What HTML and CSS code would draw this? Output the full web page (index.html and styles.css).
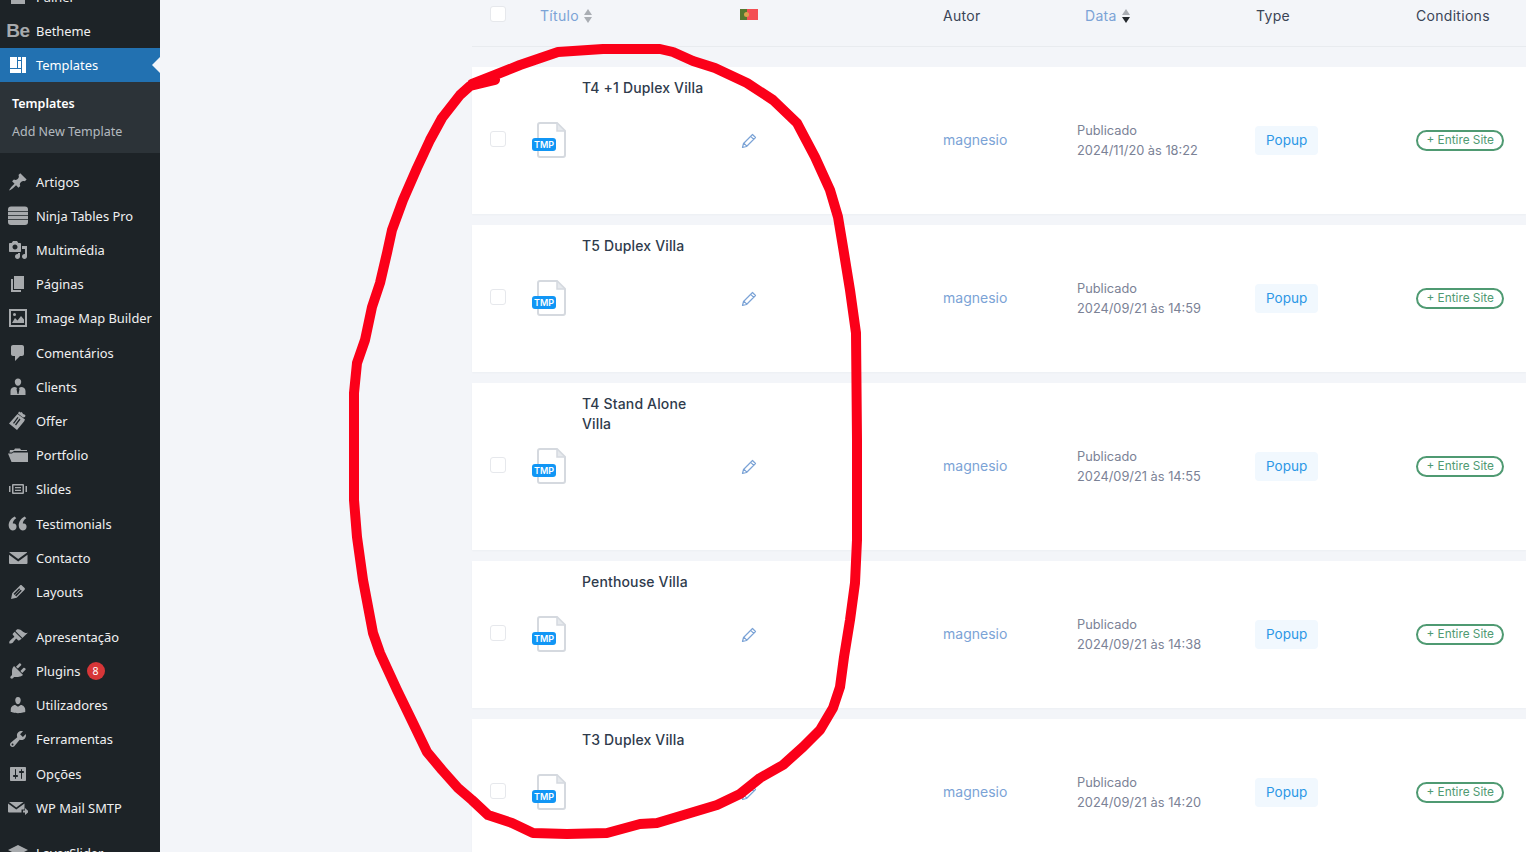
FILE: index.html
```html
<!DOCTYPE html>
<html lang="en">
<head>
  <meta charset="UTF-8" />
  <title>Templates</title>
  <link rel="stylesheet" href="styles.css">
</head>
<body>
  <svg width="0" height="0" class="defs">
    <symbol id="doc" viewBox="0 0 30 36">
      <path d="M3 1h17l8 8v24a2 2 0 0 1-2 2H3a2 2 0 0 1-2-2V3a2 2 0 0 1 2-2z" fill="#fff" stroke="#d5d9df" stroke-width="2"/>
      <path d="M20 2v7h7" fill="#e6e9ed" stroke="#d5d9df" stroke-width="1.5"/>
    </symbol>
    <symbol id="pen" viewBox="0 0 16 16">
      <path d="M11.500 1.500l3 3-9 9-4 1 1-4zM9.700 3.300l3 3M2.800 10.200l3 3" fill="none" stroke="#7ba3d6" stroke-width="1.200" stroke-linejoin="round"/>
    </symbol>
  </svg>

  <aside class="sidebar">
    <ul class="menu">
      <li class="item"><span class="icon"><svg viewBox="0 0 20 20"><path d="M3 3h14v14H3z"/></svg></span>Painel</li>
      <li class="item"><span class="icon be">Be</span>Betheme</li>
      <li class="item active"><span class="icon"><svg viewBox="0 0 20 20"><path d="M2 2h7v11H2zM10 2h3v3h-3zM14 2h4v16h-4zM10 6h3v7h-3zM2 14h11v4H2z"/></svg></span>Templates</li>
      <li class="submenu">
        <a class="current">Templates</a>
        <a>Add New Template</a>
      </li>
      <li class="item"><span class="icon"><svg viewBox="0 0 20 20"><path d="M10.440 3.020l1.820-1.820 6.360 6.350-1.830 1.820c-1.050-.68-2.480-.57-3.410.36l-.75.75c-.92.93-1.040 2.350-.35 3.410l-1.830 1.820-2.410-2.410-2.800 2.790c-.42.42-3.380 2.710-3.800 2.290s1.860-3.390 2.280-3.810l2.790-2.790L4.100 9.360l1.830-1.820c1.050.69 2.480.57 3.400-.36l.75-.75c.93-.92 1.050-2.350.36-3.410z"/></svg></span>Artigos</li>
      <li class="item"><span class="icon"><svg viewBox="0 0 20 20"><path d="M3 .5h14a3 3 0 0 1 3 3V5H0V3.500a3 3 0 0 1 3-3zM0 5.700h20v3.300H0zM0 9.700h20V13H0zM0 13.700h20V16a3 3 0 0 1-3 3H3a3 3 0 0 1-3-3z"/></svg></span>Ninja Tables Pro</li>
      <li class="item"><span class="icon"><svg viewBox="0 0 20 20"><path d="M13 11V4c0-.55-.45-1-1-1h-1.670L9 1H5L3.670 3H2c-.55 0-1 .45-1 1v7c0 .55.45 1 1 1h10c.55 0 1-.45 1-1zM7 4.500c1.380 0 2.500 1.120 2.500 2.500S8.380 9.500 7 9.500 4.500 8.380 4.500 7 5.620 4.500 7 4.500zM14 6h5v10.500c0 1.380-1.120 2.500-2.500 2.500S14 17.880 14 16.500s1.120-2.500 2.500-2.500c.17 0 .34.020.5.050V9h-3V6zm-4 8.050V13h2v3.500c0 1.380-1.120 2.500-2.500 2.500S7 17.880 7 16.500 8.120 14 9.500 14c.17 0 .34.020.5.050z"/></svg></span>Multimédia</li>
      <li class="item"><span class="icon"><svg viewBox="0 0 20 20"><path d="M6 15V2h10v13H6zm-1 1h8v2H3V5h2v11z"/></svg></span>Páginas</li>
      <li class="item"><span class="icon"><svg viewBox="0 0 20 20"><path fill-rule="evenodd" d="M1 1h18v18H1zM3 3v14h14V3zM4 15l3-5 2.500 2.500L13 8l3 3.500V15zM5 6.500a1.500 1.500 0 1 1 3 0 1.500 1.500 0 0 1-3 0z"/></svg></span>Image Map Builder</li>
      <li class="item"><span class="icon"><svg viewBox="0 0 20 20"><path d="M5 2h9c1.100 0 2 .9 2 2v7c0 1.100-.9 2-2 2h-2l-5 5v-5H5c-1.100 0-2-.9-2-2V4c0-1.100.9-2 2-2z"/></svg></span>Comentários</li>
      <li class="item"><span class="icon"><svg viewBox="0 0 20 20"><path d="M10 1.500c2 0 3.200 1.500 3.200 3.300 0 2-1.300 4-3.200 4S6.800 6.800 6.800 4.800c0-1.800 1.200-3.300 3.200-3.300zM7 10l2.200 1-.7 1 1 5h1l1-5-.7-1L13 10c2.500 0 4.500 1.500 4.500 4v4h-15v-4c0-2.500 2-4 4.500-4z"/></svg></span>Clients</li>
      <li class="item"><span class="icon"><svg viewBox="0 0 20 20"><path fill-rule="evenodd" d="M9.500 3l7.500 5.500-1 2L9 19l-8-6.500zM11 0.500l1.500 1 1-.5 1 1 .5 1 1.500.5 1 1-.5 1.500-2 .5-5-4zM9.500 6l-4.500 6 1 .8 4.500-6zM11.500 7.600l-4.500 6 1 .8 4.500-6z"/></svg></span>Offer</li>
      <li class="item"><span class="icon"><svg viewBox="0 0 20 20"><path d="M2 5h4l1-1.500h5L13 5h6v1H6L3.800 7.500H1.500zM5 7.500h15V17H3.500L0 8.500h4z"/></svg></span>Portfolio</li>
      <li class="item"><span class="icon"><svg viewBox="0 0 20 20"><path fill-rule="evenodd" d="M5 5h10a1 1 0 0 1 1 1v8a1 1 0 0 1-1 1H5a1 1 0 0 1-1-1V6a1 1 0 0 1 1-1zM5.500 6.500v7h9v-7zM7 8h6v1.200H7zM7 10.800h6V12H7zM1 7h1.500v6H1zM17.500 7H19v6h-1.500z"/></svg></span>Slides</li>
      <li class="item"><span class="icon"><svg viewBox="0 0 20 20"><path d="M8.540 12.740c0-.87-.24-1.610-.72-2.220-.73-.92-2.140-1.030-2.960-.85-.34-1.930 1.300-4.390 3.420-5.450L6.650 2.500C3.450 4.030.29 7.850.72 12.100c.28 2.290 1.600 4.400 3.780 4.400 2.360 0 4.040-1.550 4.040-3.760zm10.040 0c0-.87-.24-1.610-.72-2.220-.73-.92-2.140-1.030-2.960-.85-.34-1.930 1.300-4.390 3.420-5.450L16.690 2.500c-3.200 1.530-6.360 5.350-5.930 9.600.28 2.290 1.600 4.400 3.780 4.400 2.360 0 4.040-1.550 4.040-3.760z"/></svg></span>Testimonials</li>
      <li class="item"><span class="icon"><svg viewBox="0 0 20 20"><path d="M2 4h16.500c.5 0 .7.400.3.800L10.200 11 1.700 4.800C1.300 4.400 1.500 4 2 4zM1 6.800l9.200 6.600 9.300-6.600V15a1 1 0 0 1-1 1H2a1 1 0 0 1-1-1z"/></svg></span>Contacto</li>
      <li class="item"><span class="icon"><svg viewBox="0 0 20 20"><path d="M13.890 3.390l2.710 2.720c.46.46.42 1.240.03 1.640l-8.010 8.020-5.560 1.160 1.160-5.580s7.600-7.630 7.990-8.030c.39-.39 1.220-.39 1.680.07zm-2.730 2.790l-5.590 5.610 1.110 1.110 5.540-5.650zm-2.970 8.230l5.580-5.600-1.070-1.080-5.590 5.600z"/></svg></span>Layouts</li>
      <li class="item sep"><span class="icon"><svg viewBox="0 0 20 20"><path d="M14.480 11.060L7.410 3.990l1.500-1.500c.5-.56 2.300-.47 3.510.32 1.210.8 1.430 1.280 2.910 2.100 1.180.64 2.450 1.260 4.450.85zm-.71.71L6.700 4.700 4.930 6.470c-.39.39-.39 1.020 0 1.410l1.060 1.060c.39.39.39 1.030 0 1.420-.6.6-1.430 1.110-2.210 1.690-.35.26-.7.53-1.010.84C1.430 13.710.96 15.120 1.400 16.400c1.280.44 2.690-.03 3.640-1.020.31-.31.58-.66.84-1.010.58-.78 1.090-1.610 1.690-2.210.39-.39 1.030-.39 1.420 0l1.060 1.060c.39.39 1.020.39 1.410 0z"/></svg></span>Apresentação</li>
      <li class="item"><span class="icon"><svg viewBox="0 0 20 20"><path d="M13.110 4.360L9.870 7.600 8 5.730l3.240-3.240c.35-.34 1.050-.2 1.560.32.52.51.66 1.210.31 1.550zm-8 1.770l.91-1.120 9.010 9.010-1.190.84c-.71.71-2.630 1.160-3.820 1.160H6.140L4.900 17.260c-.59.59-1.540.59-2.120 0-.59-.58-.59-1.530 0-2.120l1.240-1.240v-3.880c0-1.130.4-3.190 1.090-3.890zm7.260 3.970l3.240-3.240c.34-.35 1.040-.21 1.550.31.52.51.66 1.210.31 1.550l-3.240 3.250z"/></svg></span>Plugins<span class="count">8</span></li>
      <li class="item"><span class="icon"><svg viewBox="0 0 20 20"><path d="M10 9.250c-2.270 0-2.730-3.440-2.730-3.440C7 4.020 7.820 2 9.970 2c2.160 0 2.980 2.020 2.710 3.810 0 0-.41 3.440-2.680 3.440zm0 2.570L12.720 10c2.390 0 4.520 2.330 4.520 4.530v2.490s-3.650 1.130-7.240 1.130c-3.650 0-7.240-1.130-7.240-1.130v-2.490c0-2.250 1.940-4.480 4.470-4.480z"/></svg></span>Utilizadores</li>
      <li class="item"><span class="icon"><svg viewBox="0 0 20 20"><path d="M16.680 9.770c-1.340 1.340-3.300 1.670-4.950.99l-5.410 6.520c-.99.99-2.590.99-3.580 0s-.99-2.590 0-3.570l6.520-5.420c-.68-1.650-.35-3.610.99-4.950 1.280-1.280 3.120-1.620 4.720-1.060l-2.890 2.890 2.820 2.820 2.860-2.870c.53 1.580.18 3.390-1.080 4.650zM3.810 16.210c.4.39 1.040.39 1.430 0 .4-.4.4-1.040 0-1.430-.39-.4-1.030-.4-1.430 0-.39.39-.39 1.030 0 1.430z"/></svg></span>Ferramentas</li>
      <li class="item"><span class="icon"><svg viewBox="0 0 20 20"><path d="M18 16V4c0-.55-.45-1-1-1H3c-.55 0-1 .45-1 1v12c0 .55.45 1 1 1h14c.55 0 1-.45 1-1zM8 11h1c.55 0 1 .45 1 1s-.45 1-1 1H8v1.500c0 .28-.22.5-.5.5s-.5-.22-.5-.5V13H6c-.55 0-1-.45-1-1s.45-1 1-1h1V5.500c0-.28.22-.5.5-.5s.5.22.5.5V11zm5-2h-1c-.55 0-1-.45-1-1s.45-1 1-1h1V5.500c0-.28.22-.5.5-.5s.5.22.5.5V7h1c.55 0 1 .45 1 1s-.45 1-1 1h-1v5.500c0 .28-.22.5-.5.5s-.5-.22-.5-.5V9z"/></svg></span>Opções</li>
      <li class="item"><span class="icon"><svg viewBox="0 0 20 20"><path d="M1 4h14.500L8.300 9.500 1 4zM0 5.500l8.300 6 8.200-6v6h-3v3H1a1 1 0 0 1-1-1zM15 12.500h2V10l4 3.500-4 3.500v-2.500h-2z"/></svg></span>WP Mail SMTP</li>
      <li class="item sep"><span class="icon"><svg viewBox="0 0 20 20"><path d="M10 2l10 5-10 5L0 7zM2 10.500l8 4 8-4 2 1-10 5-10-5z"/></svg></span>LayerSlider</li>
    </ul>
  </aside>

  <main class="content">
    <div class="list-head">
      <span class="check"></span>
      <span class="sort-link">Título <i class="sort"><b class="up"></b><b class="down"></b></i></span>
      <span class="flag"><i class="flag-green"></i><i class="flag-red"></i><i class="flag-dot"></i></span>
      <span>Autor</span>
      <span class="sort-link">Data <i class="sort"><b class="up"></b><b class="down dark"></b></i></span>
      <span>Type</span>
      <span>Conditions</span>
    </div>

    <div class="row">
      <span class="check"></span>
      <span class="doc"><svg><use href="#doc"/></svg><em>TMP</em></span>
      <span class="title">T4 +1 Duplex Villa</span>
      <span class="edit"><svg><use href="#pen"/></svg></span>
      <span class="author">magnesio</span>
      <span class="date">Publicado<br>2024/11/20 às 18:22</span>
      <span><span class="type">Popup</span></span>
      <span><span class="cond">+ Entire Site</span></span>
    </div>
    <div class="row">
      <span class="check"></span>
      <span class="doc"><svg><use href="#doc"/></svg><em>TMP</em></span>
      <span class="title">T5 Duplex Villa</span>
      <span class="edit"><svg><use href="#pen"/></svg></span>
      <span class="author">magnesio</span>
      <span class="date">Publicado<br>2024/09/21 às 14:59</span>
      <span><span class="type">Popup</span></span>
      <span><span class="cond">+ Entire Site</span></span>
    </div>
    <div class="row tall">
      <span class="check"></span>
      <span class="doc"><svg><use href="#doc"/></svg><em>TMP</em></span>
      <span class="title">T4 Stand Alone Villa</span>
      <span class="edit"><svg><use href="#pen"/></svg></span>
      <span class="author">magnesio</span>
      <span class="date">Publicado<br>2024/09/21 às 14:55</span>
      <span><span class="type">Popup</span></span>
      <span><span class="cond">+ Entire Site</span></span>
    </div>
    <div class="row">
      <span class="check"></span>
      <span class="doc"><svg><use href="#doc"/></svg><em>TMP</em></span>
      <span class="title">Penthouse Villa</span>
      <span class="edit"><svg><use href="#pen"/></svg></span>
      <span class="author">magnesio</span>
      <span class="date">Publicado<br>2024/09/21 às 14:38</span>
      <span><span class="type">Popup</span></span>
      <span><span class="cond">+ Entire Site</span></span>
    </div>
    <div class="row">
      <span class="check"></span>
      <span class="doc"><svg><use href="#doc"/></svg><em>TMP</em></span>
      <span class="title">T3 Duplex Villa</span>
      <span class="edit"><svg><use href="#pen"/></svg></span>
      <span class="author">magnesio</span>
      <span class="date">Publicado<br>2024/09/21 às 14:20</span>
      <span><span class="type">Popup</span></span>
      <span><span class="cond">+ Entire Site</span></span>
    </div>
  </main>

  <!-- hand drawn marker on top of the screenshot -->
  <svg class="scribble" viewBox="0 0 1526 852">
    <path d="M495 80L470 86L460 95L442 118L430 140L417 168L403 200L392 230L387 253L380 283L372 307L365 340L357 363L354 393L354 440L354 500L357 537L363 580L373 633L380 653L397 690L413 723L427 752L442 770L458 788L472 800L488 815L512 823L533 833L567 834L607 833L640 824L657 823L687 814L717 805L740 794L760 778L783 765L803 747L820 730L833 708L840 687L844 657L850 620L855 583L857 540L857 440L856 333L850 290L843 247L838 217L830 190L815 157L797 123L773 100L747 83L715 68L693 61L673 52L660 49L603 49L558 52L520 65L495 75L472 84"/>
  </svg>
</body>
</html>
```

FILE: styles.css
```css
:root {
  --sidebar: #1d2327;
  --sidebar-sub: #2c3338;
  --active: #2271b1;
  --page-bg: #f3f5f9;
  --link: #7ba3d6;
  --dark-text: #3a4456;
  --icon: #a7aaad;
}

html, body {
  height: 100%;
}

body {
  margin: 0;
  display: flex;
  overflow: hidden;
  background: var(--page-bg);
  font-family: Inter, sans-serif;
  font-size: 14px;
  color: var(--dark-text);
}

.defs {
  position: absolute;
}

/* Sidebar */
.sidebar {
  width: 160px;
  flex: none;
  background: var(--sidebar);
  font-family: "Noto Sans", sans-serif;
  font-size: 12.900px;
  color: #f0f0f1;
}

.menu {
  list-style: none;
  margin: -20.500px 0 0;
  padding: 0;
}

.item {
  height: 34.2px;
  display: flex;
  align-items: center;
  position: relative;
}
.item.sep {
  margin-top: 10.8px;
}
.item.active {
  background: var(--active);
  color: #fff;
}
.item.active::after {
  content: "";
  position: absolute;
  right: 0;
  top: 50%;
  margin-top: -8px;
  border: 8px solid transparent;
  border-left-width: 0;
  border-right-color: var(--page-bg);
}
.item.active svg {
  fill: #fff;
}

.icon {
  width: 36px;
  flex: none;
  display: flex;
  justify-content: center;
}
.icon svg {
  width: 20px;
  height: 20px;
  fill: var(--icon);
}
.be {
  font-family: "Liberation Sans", sans-serif;
  font-weight: 700;
  font-size: 19px;
  line-height: 20px;
  letter-spacing: -0.5px;
  color: var(--icon);
}

.count {
  width: 18px;
  height: 18px;
  margin-left: 6px;
  border-radius: 50%;
  background: #d63638;
  color: #fff;
  font-size: 10.5px;
  line-height: 18px;
  text-align: center;
}

.submenu {
  background: var(--sidebar-sub);
  height: 70.500px;
  margin-bottom: 12px;
  padding: 7.500px 12px;
  box-sizing: border-box;
  font-size: 12.500px;
}
.submenu a {
  display: block;
  height: 28px;
  line-height: 28px;
  color: rgba(240, 246, 252, 0.7);
}
.submenu a.current {
  color: #fff;
  font-weight: 600;
}

/* List */
.content {
  flex: 1;
  min-width: 0;
  padding-left: 312px;
}

.list-head,
.row {
  display: grid;
  padding-left: 18px;
}

.list-head {
  grid-template-columns: 50px 200px 203px 142px 171px 160px 1fr;
  height: 31px;
  padding-bottom: 15px;
  border-bottom: 1px solid #e8ebef;
  margin-bottom: 20px;
  align-items: center;
  letter-spacing: 0.3px;
}

.sort-link {
  color: var(--link);
  display: flex;
  align-items: center;
  gap: 5px;
}
.sort {
  display: inline-flex;
  flex-direction: column;
  gap: 2px;
}
.sort b {
  width: 0;
  height: 0;
  border: 4.500px solid transparent;
  border-top-width: 0;
  border-bottom-color: #a9adb3;
  border-bottom-width: 6px;
}
.sort b.down {
  border-bottom-width: 0;
  border-bottom-color: transparent;
  border-top: 6px solid #a9adb3;
}
.sort b.down.dark {
  border-top-color: #23282d;
}

.flag {
  width: 18px;
  height: 11px;
  margin-bottom: 2px;
  position: relative;
  display: flex;
  justify-self: start;
}
.flag-green {
  width: 7px;
  background: #55782f;
}
.flag-red {
  flex: 1;
  background: #f44f54;
}
.flag-dot {
  position: absolute;
  left: 4px;
  top: 3px;
  width: 5px;
  height: 5px;
  border-radius: 50%;
  background: #d9a24e;
}

.check {
  width: 14px;
  height: 14px;
  border: 1px solid #e6e8ec;
  border-radius: 3px;
  background: #fff;
}
.list-head .check {
  margin-top: -4px;
}
.row .check {
  margin-top: -3px;
}

.row {
  grid-template-columns: 42px 50px 160px 201px 134px 178px 161px 1fr;
  height: 147px;
  margin-bottom: 11px;
  background: #fff;
  align-items: center;
  box-shadow: 0 1px 2px rgba(40, 50, 70, 0.03);
}
.row.tall {
  height: 167px;
}

.doc {
  position: relative;
  width: 34px;
  height: 36px;
  margin-top: -1px;
  display: block;
}
.doc svg {
  position: absolute;
  left: 5px;
  top: 0;
  width: 30px;
  height: 36px;
}
.doc em {
  position: absolute;
  left: 0;
  top: 16px;
  width: 24px;
  height: 13px;
  border-radius: 3px;
  background: #1196f5;
  color: #fff;
  font-style: normal;
  font-weight: 600;
  font-size: 9px;
  line-height: 13px;
  text-align: center;
}

.title {
  align-self: start;
  width: 126px;
  padding-top: 11px;
  line-height: 20px;
  font-weight: 500;
  letter-spacing: 0.15px;
  color: #2f3b4c;
}

.edit {
  height: 16px;
  margin-left: -1px;
}
.edit svg {
  width: 16px;
  height: 16px;
}

.author {
  padding-bottom: 2px;
  color: var(--link);
}

.date {
  font-size: 12.800px;
  line-height: 20px;
  color: #7b8296;
}

.type {
  display: inline-block;
  padding: 0 11px;
  font-size: 13.500px;
  line-height: 29px;
  border-radius: 4px;
  background: #f1f8fe;
  color: #2c97e6;
}

.cond {
  display: inline-block;
  padding: 0 8.500px;
  line-height: 17px;
  border: 2px solid #4f9a72;
  border-radius: 11px;
  font-size: 11.800px;
  color: #4f9a72;
}

.scribble {
  position: absolute;
  left: 0;
  top: 0;
  width: 1526px;
  height: 852px;
  pointer-events: none;
}
.scribble path {
  fill: none;
  stroke: #fb0019;
  stroke-width: 10;
  stroke-linejoin: round;
  stroke-linecap: round;
}
```
